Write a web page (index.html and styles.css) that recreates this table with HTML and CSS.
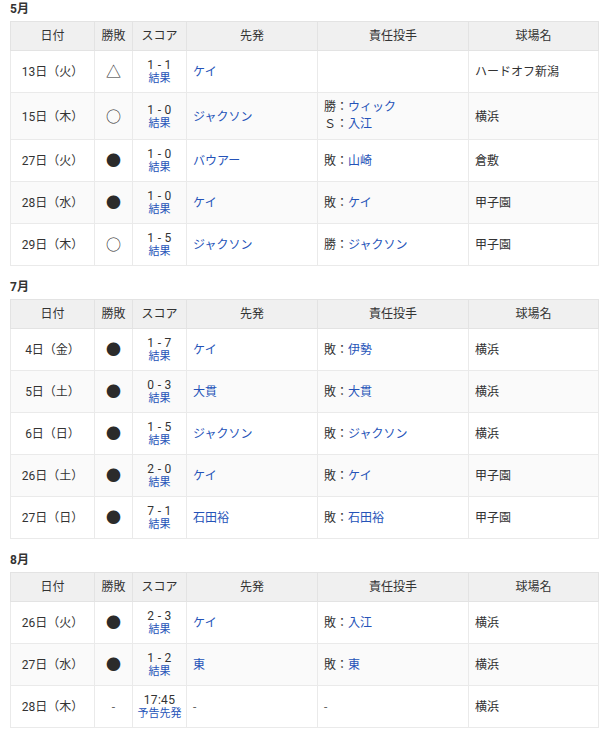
FILE: index.html
```html
<!DOCTYPE html>
<html lang="ja">
<head>
<meta charset="utf-8">
<link rel="stylesheet" href="styles.css">
</head>
<body>
<section class="month">
  <h2 class="month-title first">5月</h2>
  <table class="games">
    <colgroup><col class="c-date"><col class="c-res"><col class="c-score"><col class="c-starter"><col class="c-pitcher"><col class="c-park"></colgroup>
    <thead><tr><th>日付</th><th>勝敗</th><th>スコア</th><th>先発</th><th>責任投手</th><th>球場名</th></tr></thead>
    <tbody>
      <tr><td class="date">13日（火）</td><td class="res">△</td><td class="score"><span class="pts">1 - 1</span><a class="lnk">結果</a></td><td><a class="lnk">ケイ</a></td><td class="pitch"></td><td>ハードオフ新潟</td></tr>
      <tr><td class="date">15日（木）</td><td class="res">○</td><td class="score"><span class="pts">1 - 0</span><a class="lnk">結果</a></td><td><a class="lnk">ジャクソン</a></td><td class="pitch two">勝：<a class="lnk">ウィック</a><br>Ｓ：<a class="lnk">入江</a></td><td>横浜</td></tr>
      <tr><td class="date">27日（火）</td><td class="res">●</td><td class="score"><span class="pts">1 - 0</span><a class="lnk">結果</a></td><td><a class="lnk">バウアー</a></td><td class="pitch">敗：<a class="lnk">山崎</a></td><td>倉敷</td></tr>
      <tr><td class="date">28日（水）</td><td class="res">●</td><td class="score"><span class="pts">1 - 0</span><a class="lnk">結果</a></td><td><a class="lnk">ケイ</a></td><td class="pitch">敗：<a class="lnk">ケイ</a></td><td>甲子園</td></tr>
      <tr><td class="date">29日（木）</td><td class="res">○</td><td class="score"><span class="pts">1 - 5</span><a class="lnk">結果</a></td><td><a class="lnk">ジャクソン</a></td><td class="pitch">勝：<a class="lnk">ジャクソン</a></td><td>甲子園</td></tr>
    </tbody>
  </table>
</section>
<section class="month">
  <h2 class="month-title">7月</h2>
  <table class="games">
    <colgroup><col class="c-date"><col class="c-res"><col class="c-score"><col class="c-starter"><col class="c-pitcher"><col class="c-park"></colgroup>
    <thead><tr><th>日付</th><th>勝敗</th><th>スコア</th><th>先発</th><th>責任投手</th><th>球場名</th></tr></thead>
    <tbody>
      <tr><td class="date">4日（金）</td><td class="res">●</td><td class="score"><span class="pts">1 - 7</span><a class="lnk">結果</a></td><td><a class="lnk">ケイ</a></td><td class="pitch">敗：<a class="lnk">伊勢</a></td><td>横浜</td></tr>
      <tr><td class="date">5日（土）</td><td class="res">●</td><td class="score"><span class="pts">0 - 3</span><a class="lnk">結果</a></td><td><a class="lnk">大貫</a></td><td class="pitch">敗：<a class="lnk">大貫</a></td><td>横浜</td></tr>
      <tr><td class="date">6日（日）</td><td class="res">●</td><td class="score"><span class="pts">1 - 5</span><a class="lnk">結果</a></td><td><a class="lnk">ジャクソン</a></td><td class="pitch">敗：<a class="lnk">ジャクソン</a></td><td>横浜</td></tr>
      <tr><td class="date">26日（土）</td><td class="res">●</td><td class="score"><span class="pts">2 - 0</span><a class="lnk">結果</a></td><td><a class="lnk">ケイ</a></td><td class="pitch">敗：<a class="lnk">ケイ</a></td><td>甲子園</td></tr>
      <tr><td class="date">27日（日）</td><td class="res">●</td><td class="score"><span class="pts">7 - 1</span><a class="lnk">結果</a></td><td><a class="lnk">石田裕</a></td><td class="pitch">敗：<a class="lnk">石田裕</a></td><td>甲子園</td></tr>
    </tbody>
  </table>
</section>
<section class="month">
  <h2 class="month-title">8月</h2>
  <table class="games">
    <colgroup><col class="c-date"><col class="c-res"><col class="c-score"><col class="c-starter"><col class="c-pitcher"><col class="c-park"></colgroup>
    <thead><tr><th>日付</th><th>勝敗</th><th>スコア</th><th>先発</th><th>責任投手</th><th>球場名</th></tr></thead>
    <tbody>
      <tr><td class="date">26日（火）</td><td class="res">●</td><td class="score"><span class="pts">2 - 3</span><a class="lnk">結果</a></td><td><a class="lnk">ケイ</a></td><td class="pitch">敗：<a class="lnk">入江</a></td><td>横浜</td></tr>
      <tr><td class="date">27日（水）</td><td class="res">●</td><td class="score"><span class="pts">1 - 2</span><a class="lnk">結果</a></td><td><a class="lnk">東</a></td><td class="pitch">敗：<a class="lnk">東</a></td><td>横浜</td></tr>
      <tr><td class="date">28日（木）</td><td class="res dash">-</td><td class="score"><span class="pts">17:45</span><a class="lnk">予告先発</a></td><td class="dash">-</td><td class="pitch dash">-</td><td>横浜</td></tr>
    </tbody>
  </table>
</section>
</body>
</html>
```
FILE: styles.css
```css
html, body {
  margin: 0;
  padding: 0;
  background: #fff;
}
body {
  padding: 0 2px 0 10px;
  font-family: Roboto, "Noto Sans CJK JP", sans-serif;
  font-size: 12px;
  color: #333;
}
.month-title {
  margin: 14px 0 5px;
  font-size: 12px;
  line-height: 14px;
  font-weight: bold;
  color: #333;
}
.month-title.first {
  margin-top: 2px;
}
.games {
  width: 588px;
  table-layout: fixed;
  border-collapse: collapse;
  border: 1px solid #e3e3e3;
}
.c-date { width: 84px; }
.c-res { width: 38px; }
.c-score { width: 54px; }
.c-starter { width: 131px; }
.c-pitcher { width: 151px; }
.c-park { width: 130px; }
.games th {
  background: #f0f0f0;
  font-weight: normal;
  font-size: 12px;
  line-height: 16px;
  padding: 6px 2px;
  border: 1px solid #e3e3e3;
  text-align: center;
  color: #333;
}
.games td {
  border: 1px solid #eaeaea;
  padding: 7px 6px 6px;
  line-height: 14px;
  vertical-align: middle;
  text-align: left;
  white-space: nowrap;
}
.games tbody tr:nth-child(even) td {
  background: #fafafa;
}
.games td.date {
  text-align: center;
}
.games td.res {
  text-align: center;
  font-size: 15px;
  padding-left: 2px;
  padding-right: 2px;
  color: #2b2b2b;
}
.games td.res.dash {
  font-size: 12px;
  color: #666;
}
.games td.score {
  text-align: center;
  padding-left: 2px;
  padding-right: 2px;
}
.pts {
  display: block;
  font-size: 12px;
  line-height: 14px;
  letter-spacing: 0.3px;
}
.score .lnk {
  display: block;
  font-size: 11px;
  line-height: 14px;
}
.lnk {
  color: #2553b8;
  text-decoration: none;
}
.games td.pitch.two {
  line-height: 17px;
  padding-top: 6px;
}
.dash {
  color: #666;
}
```
